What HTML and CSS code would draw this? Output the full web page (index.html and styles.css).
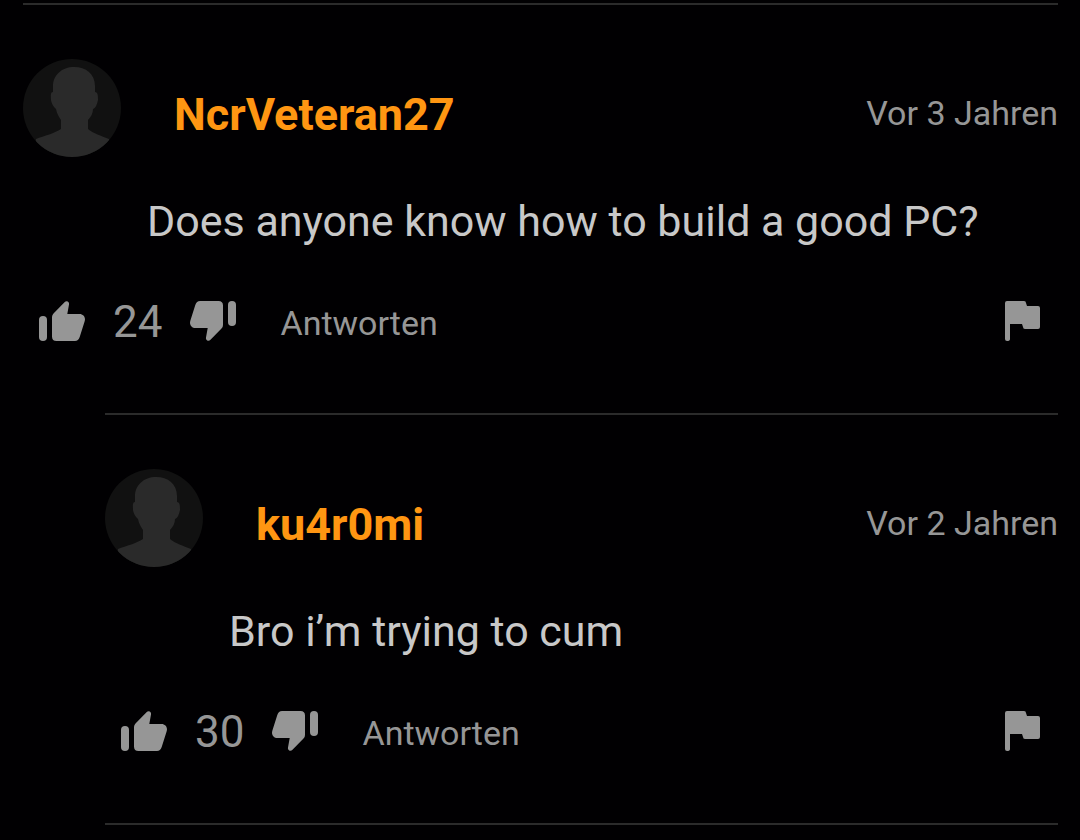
FILE: index.html
```html
<!DOCTYPE html>
<html lang="de">

<head>
    <meta charset="UTF-8">
    <meta name="viewport" content="width=device-width, initial-scale=1.0">
    <title>Kommentare</title>
    <link rel="stylesheet" href="styles.css">
</head>

<body>
    <svg class="sprite" aria-hidden="true">
        <symbol id="avatar" viewBox="0 0 98 98">
            <path d="M51 8C39 8 30 16 30 27V33C27 33 28 38 28 41C29 46 31 48 33 50C34 55 36 58 38 61V70C32 74 21 77 13 80L10 98H90L86 80C79 77 71 75 65 70V61C68 58 70 54 70 50C73 49 74 45 75 41C75 37 75 33 72 33V27C72 15 63 8 51 8Z" />
        </symbol>
        <symbol id="thumb" viewBox="0 0 46 40">
            <rect x="0" y="15" width="8" height="25" rx="4" />
            <path d="M13 16Q13 14 14.500 12.500L25.500 1.200Q27 -.3 28.800 .5Q30.400 1.500 30 3.500L28.300 13H40.500C44.500 13 47 16.500 45.600 20.500L40.700 36Q39.400 40 36 40H17.500Q13 40 13 35.500Z" />
        </symbol>
        <symbol id="flag" viewBox="0 0 36 40">
            <path d="M0 2Q0 0 2 0H19Q21 0 21 2L22 5H33Q35 5 35 7V26Q35 28 33 28H20Q18 28 18 26L17 23H5V38Q5 40 2 40Q0 40 0 38Z" />
        </symbol>
    </svg>

    <main class="comments">
        <article class="comment">
            <header class="comment-header">
                <svg class="avatar" aria-hidden="true"><use href="#avatar" /></svg>
                <a class="username" href="#">NcrVeteran27</a>
                <time class="date">Vor 3 Jahren</time>
            </header>
            <p class="comment-text">Does anyone know how to build a good PC?</p>
            <div class="actions">
                <button class="vote" type="button" aria-label="Gefällt mir"><svg><use href="#thumb" /></svg></button>
                <span class="count">24</span>
                <button class="vote down" type="button" aria-label="Gefällt mir nicht"><svg><use href="#thumb" /></svg></button>
                <button class="reply" type="button">Antworten</button>
                <button class="flag" type="button" aria-label="Melden"><svg><use href="#flag" /></svg></button>
            </div>
        </article>

        <div class="replies">
            <article class="comment">
                <header class="comment-header">
                    <svg class="avatar" aria-hidden="true"><use href="#avatar" /></svg>
                    <a class="username" href="#">ku4r0mi</a>
                    <time class="date">Vor 2 Jahren</time>
                </header>
                <p class="comment-text">Bro i’m trying to cum</p>
                <div class="actions">
                    <button class="vote" type="button" aria-label="Gefällt mir"><svg><use href="#thumb" /></svg></button>
                    <span class="count">30</span>
                    <button class="vote down" type="button" aria-label="Gefällt mir nicht"><svg><use href="#thumb" /></svg></button>
                    <button class="reply" type="button">Antworten</button>
                    <button class="flag" type="button" aria-label="Melden"><svg><use href="#flag" /></svg></button>
                </div>
            </article>
        </div>
    </main>
</body>

</html>
```
FILE: styles.css
```css
* {
    box-sizing: border-box;
}

body {
    margin: 0;
    background-color: #010002;
    color: #969696;
    font-family: Roboto, sans-serif;
}

button {
    padding: 0;
    border: none;
    background: none;
    color: inherit;
    font-family: inherit;
    cursor: pointer;
}

svg {
    display: block;
    fill: currentColor;
}

.sprite {
    display: none;
}

.comments {
    padding: 3px 22px 0 23px;
}

.comment {
    padding: 54px 0 72px;
    border-top: 2px solid #2b2b2b;
}

.replies {
    margin-left: 82px;
    border-bottom: 2px solid #2b2b2b;
}

.comment-header {
    display: flex;
    align-items: center;
}

.avatar {
    width: 98px;
    height: 98px;
    border-radius: 50%;
    background-color: #111111;
    color: #2a2a2a;
}

.username {
    margin: 14px 0 0 53px;
    color: #ff9612;
    font-size: 45px;
    font-weight: bold;
    line-height: 52px;
    text-decoration: none;
}

.date {
    margin: 10px 0 0 auto;
    font-size: 34px;
    line-height: 40px;
}

.comment-text {
    margin: 34px 0 0 124px;
    color: #c8c8c8;
    font-size: 43px;
    line-height: 60px;
}

.actions {
    display: flex;
    align-items: center;
    height: 40px;
    margin-top: 50px;
    padding: 0 17px 0 16px;
}

.vote svg {
    width: 46px;
    height: 40px;
}

.down svg {
    transform: rotate(180deg);
}

.count {
    margin: 0 28px;
    padding-top: 2px;
    font-size: 44px;
    line-height: 40px;
}

.reply {
    margin-left: 44px;
    padding-top: 4px;
    font-size: 34px;
    line-height: 40px;
}

.flag {
    margin-left: auto;
}

.flag svg {
    width: 36px;
    height: 40px;
}
```
